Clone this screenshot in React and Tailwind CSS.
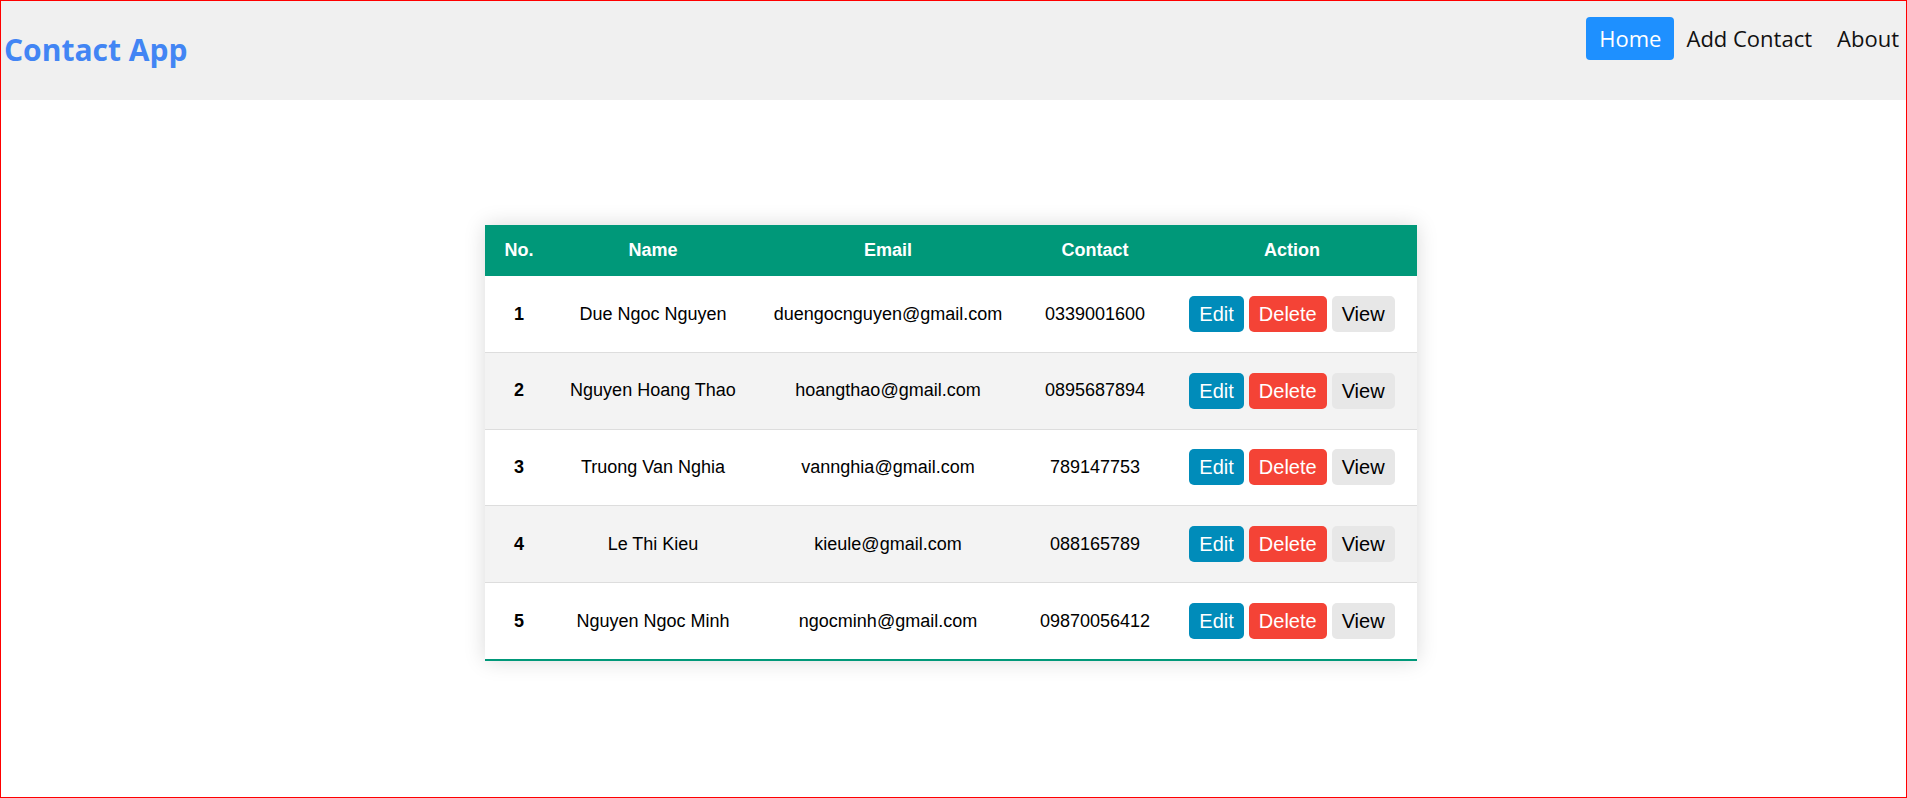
import React from "react";

const rows = [
  { no: 1, name: "Due Ngoc Nguyen", email: "duengocnguyen@gmail.com", contact: "0339001600" },
  { no: 2, name: "Nguyen Hoang Thao", email: "hoangthao@gmail.com", contact: "0895687894" },
  { no: 3, name: "Truong Van Nghia", email: "vannghia@gmail.com", contact: "789147753" },
  { no: 4, name: "Le Thi Kieu", email: "kieule@gmail.com", contact: "088165789" },
  { no: 5, name: "Nguyen Ngoc Minh", email: "ngocminh@gmail.com", contact: "09870056412" },
];

export default function App() {
  return (
    <div className="w-[1907px] h-[798px] border border-[#ff0000] bg-white overflow-hidden">
      <header className="h-[99px] bg-[#f0f0f0] flex justify-between items-start">
        <h1
          className="ml-[3px] mt-[29px] text-[30px] leading-[40px] font-bold text-[#4285f4]"
          style={{ fontFamily: '"Open Sans", "Noto Sans", sans-serif' }}
        >
          Contact App
        </h1>
        <nav
          className="flex items-center mt-[16px] text-[22px] text-[#111111]"
          style={{ fontFamily: '"Open Sans", "Noto Sans", sans-serif' }}
        >
          <a className="h-[43px] px-[13px] flex items-center bg-[#1e90ff] text-white rounded-[4px]">Home</a>
          <a className="h-[43px] pl-[12px] pr-[13px] flex items-center">Add Contact</a>
          <a className="h-[43px] pl-[12px] pr-[7px] flex items-center">About</a>
        </nav>
      </header>

      <div className="mt-[125px] ml-[484px] w-[932px] shadow-[0_0_20px_rgba(0,0,0,0.15)]" style={{ fontFamily: '"Liberation Sans", Arial, sans-serif' }}>
        <table className="w-[932px] border-collapse text-[18px] text-black text-center">
          <thead>
            <tr className="bg-[#009879] text-white font-bold h-[51px]">
              <th className="w-[68px] p-0">No.</th>
              <th className="w-[200px] p-0">Name</th>
              <th className="w-[270px] p-0">Email</th>
              <th className="w-[144px] p-0">Contact</th>
              <th className="w-[250px] p-0">Action</th>
            </tr>
          </thead>
          <tbody>
            {rows.map((r, i) => (
              <tr
                key={r.no}
                className={
                  (i % 2 === 1 ? "bg-[#f3f3f3] " : "bg-white ") +
                  (i === rows.length - 1
                    ? "border-b-2 border-[#009879] h-[78px]"
                    : "border-b border-[#dddddd] h-[76.6px]")
                }
              >
                <td className="p-0 font-bold">{r.no}</td>
                <td className="p-0">{r.name}</td>
                <td className="p-0">{r.email}</td>
                <td className="p-0">{r.contact}</td>
                <td className="p-0">
                  <div className="flex justify-center gap-[5px] text-[20px]">
                    <button className="h-[36px] px-[10px] rounded-[5px] bg-[#008cba] text-white">Edit</button>
                    <button className="h-[36px] px-[10px] rounded-[5px] bg-[#f44336] text-white">Delete</button>
                    <button className="h-[36px] px-[10px] rounded-[5px] bg-[#e7e7e7] text-black">View</button>
                  </div>
                </td>
              </tr>
            ))}
          </tbody>
        </table>
      </div>
    </div>
  );
}
